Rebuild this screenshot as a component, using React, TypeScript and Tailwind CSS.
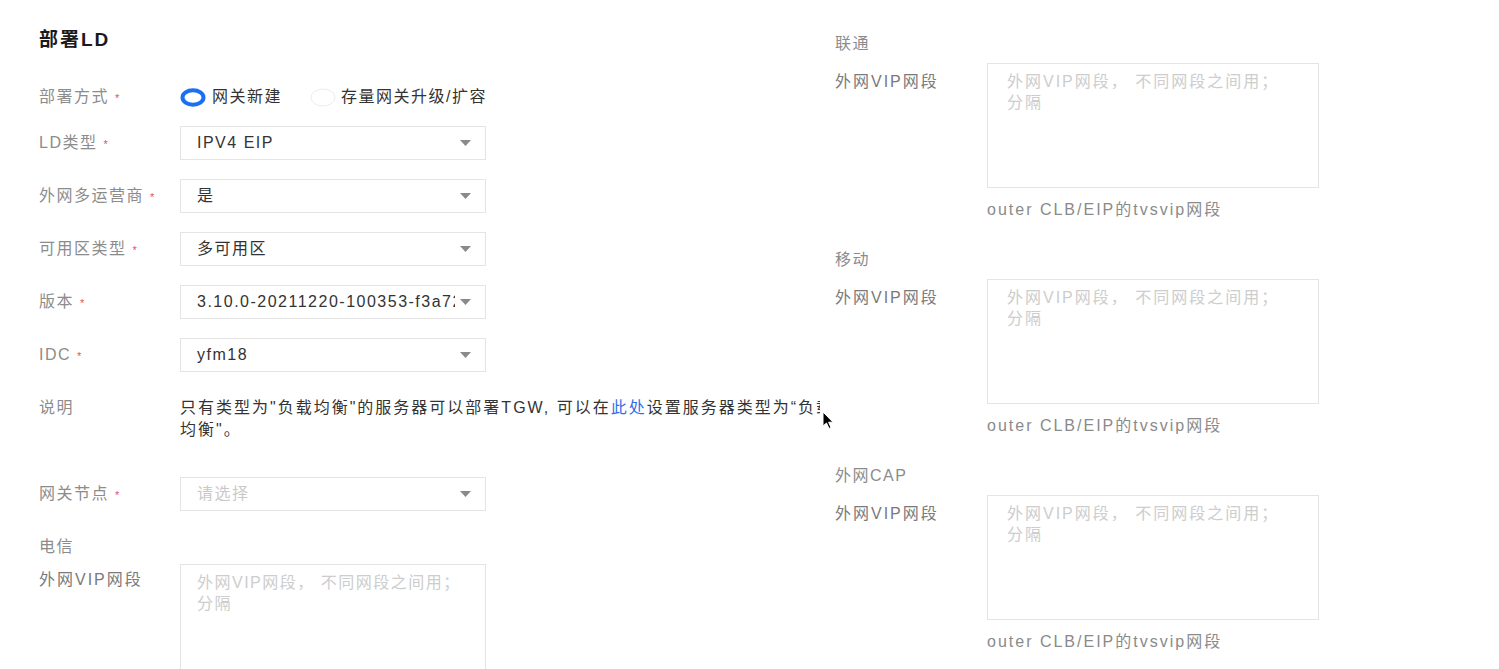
import React from "react";

const font = { fontFamily: '"Liberation Sans", "Noto Sans CJK SC", sans-serif' };

function Arrow() {
  return (
    <svg width="11" height="6" viewBox="0 0 11 6" className="shrink-0">
      <path d="M0 0 L11 0 L5.5 6 Z" fill="#8a8a8a" />
    </svg>
  );
}

function Radio({ checked }: { checked?: boolean }) {
  return (
    <svg width="26" height="19" viewBox="0 0 26 19" className="shrink-0">
      {checked ? (
        <ellipse cx="13" cy="9.5" rx="10.5" ry="7.2" fill="#fff" stroke="#1d6ff2" strokeWidth="4" />
      ) : (
        <ellipse cx="13" cy="9.5" rx="12" ry="8.5" fill="#fff" stroke="#ececec" strokeWidth="1" />
      )}
    </svg>
  );
}

function Label({ text, required }: { text: string; required?: boolean }) {
  return (
    <div className="w-[141px] shrink-0 text-[#8c8c8c]">
      {text}
      {required && <span className="ml-[6px] text-[11px] text-[#e0506a] align-middle">*</span>}
    </div>
  );
}

function Select({ value, placeholder }: { value?: string; placeholder?: string }) {
  return (
    <div className="flex h-[34px] w-[306px] items-center border border-[#e4e4e4] pl-4 pr-[14px]">
      <span
        className={
          "flex-1 overflow-hidden whitespace-nowrap " + (value ? "text-[#333]" : "text-[#c9c9c9]")
        }
      >
        {value ?? placeholder}
      </span>
      <span className="ml-[5px]">
        <Arrow />
      </span>
    </div>
  );
}

function SelectRow({ label, value, placeholder, className }: { label: string; value?: string; placeholder?: string; className?: string }) {
  return (
    <div className={"flex items-center " + (className ?? "")}>
      <Label text={label} required />
      <Select value={value} placeholder={placeholder} />
    </div>
  );
}

function VipBox({ className }: { className: string }) {
  return (
    <textarea
      readOnly
      placeholder={"外网VIP网段， 不同网段之间用；\n分隔"}
      className={
        "h-[125px] resize-none border border-[#e4e4e4] bg-white pt-[7px] leading-[21px] outline-none placeholder:text-[#cdcdcd] " +
        className
      }
    />
  );
}

function Carrier({ name, first }: { name: string; first?: boolean }) {
  return (
    <div className={first ? "" : "mt-[28px]"}>
      <div className="leading-[22px] text-[#8c8c8c]">{name}</div>
      <div className="mt-[8px] flex">
        <div className="w-[152px] shrink-0 pt-[8px] leading-[22px] tracking-[2px] text-[#7a7a7a]">外网VIP网段</div>
        <VipBox className="w-[332px] px-[19px] tracking-[2px]" />
      </div>
      <div className="mt-[11px] pl-[152px] leading-[22px] tracking-[2px] text-[#8a8a8a]">outer CLB/EIP的tvsvip网段</div>
    </div>
  );
}

export default function App() {
  return (
    <div
      className="relative flex h-[669px] overflow-hidden bg-white pl-[39px] text-[16px] tracking-[1.5px]"
      style={font}
    >
      <div className="w-[781px] shrink-0 overflow-hidden">
        <h1 className="mt-[28px] h-6 text-[19px] font-bold leading-6 tracking-[2px] text-[#1a1a1a]">部署LD</h1>

        <div className="mt-[28px] flex h-[34px] items-center">
          <Label text="部署方式" required />
          <Radio checked />
          <span className="ml-[6px] text-[#333]">网关新建</span>
          <span className="ml-[28px]">
            <Radio />
          </span>
          <span className="ml-[5px] text-[#333]">存量网关升级/扩容</span>
        </div>

        <SelectRow className="mt-[12px]" label="LD类型" value="IPV4 EIP" />
        <SelectRow className="mt-[19px]" label="外网多运营商" value="是" />
        <SelectRow className="mt-[19px]" label="可用区类型" value="多可用区" />
        <SelectRow className="mt-[19px]" label="版本" value="3.10.0-20211220-100353-f3a72c1" />
        <SelectRow className="mt-[19px]" label="IDC" value="yfm18" />

        <div className="mt-[25px] flex leading-[22px]">
          <Label text="说明" />
          <p className="whitespace-nowrap tracking-[2px] text-[#333]">
            只有类型为"负载均衡"的服务器可以部署TGW, 可以在<span className="text-[#2f6fe6]">此处</span>设置服务器类型为“负载
            <br />
            均衡"。
          </p>
        </div>

        <SelectRow className="mt-[36px]" label="网关节点" placeholder="请选择" />

        <div className="mt-[25px] leading-[22px] text-[#8c8c8c]">电信</div>
        <div className="mt-[6px] flex">
          <div className="w-[141px] shrink-0 pt-[5px] leading-[22px] tracking-[2px] text-[#7a7a7a]">外网VIP网段</div>
          <VipBox className="w-[306px] px-[16px] tracking-[1.5px]" />
        </div>
      </div>

      <div className="ml-[15px] pt-[33px]">
        <Carrier name="联通" first />
        <Carrier name="移动" />
        <Carrier name="外网CAP" />
      </div>

      <svg className="absolute left-[822px] top-[411px]" width="12" height="19" viewBox="0 0 12 19">
        <path d="M1 1 L1 15 L4.5 12 L7 17.5 L9 16.5 L6.6 11.2 L11 11.2 Z" fill="#000" stroke="#fff" strokeWidth="1" />
      </svg>
    </div>
  );
}
